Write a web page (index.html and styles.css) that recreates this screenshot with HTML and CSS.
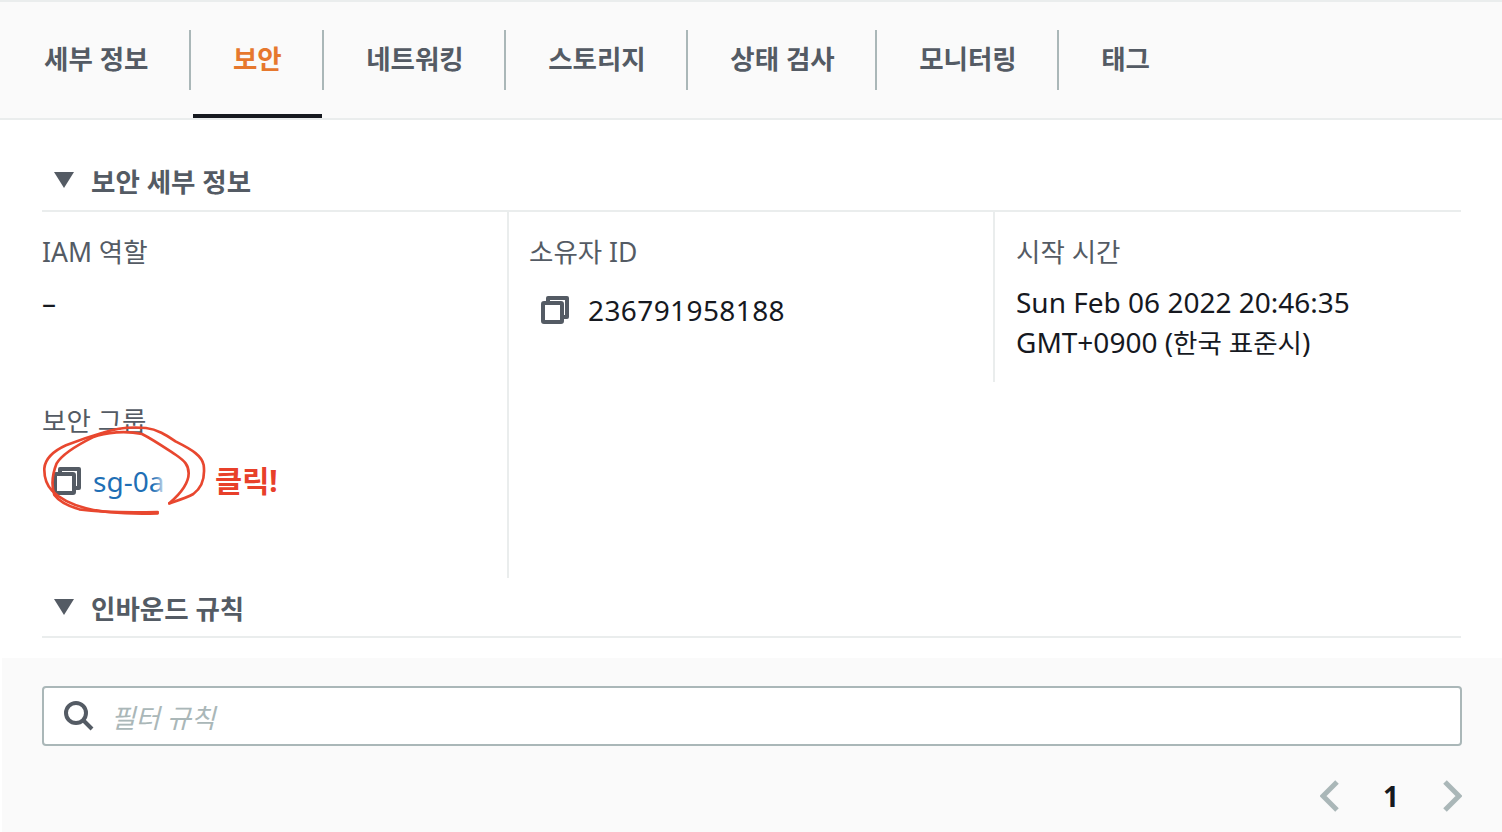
FILE: index.html
```html
<!DOCTYPE html>
<html lang="ko">
  <head>
    <meta charset="UTF-8" />
    <title>보안</title>
    <link rel="stylesheet" href="styles.css">
  </head>
  <body>
    <div class="tabs">
      <a class="tab">세부 정보</a>
      <a class="tab active">보안</a>
      <a class="tab">네트워킹</a>
      <a class="tab">스토리지</a>
      <a class="tab">상태 검사</a>
      <a class="tab">모니터링</a>
      <a class="tab last">태그</a>
    </div>

    <div class="section">
      <div class="section-head">
        <span class="caret"></span>
        <h2>보안 세부 정보</h2>
      </div>
      <div class="details">
        <div class="col col-first">
          <div class="item item-iam">
            <div class="label">IAM 역할</div>
            <div class="value">–</div>
          </div>
          <div class="item">
            <div class="label">보안 그룹</div>
            <div class="sg-row">
              <svg class="copy" viewBox="0 0 28 28"><path d="M7 7V2h19v19h-5" /><rect x="2" y="7" width="19" height="19" rx="1" /></svg>
              <a class="sg-link">sg-0a</a>
              <span class="fade"></span>
              <span class="click-note">클릭!</span>
            </div>
          </div>
          <!-- red pen circle around the security group link -->
          <svg class="scribble" viewBox="0 0 540 312">
            <path d="M400 250C430 240 455 232 472 222C495 205 508 175 503 135C498 108 470 90 420 65C390 45 365 28 330 24C290 20 240 25 200 38C165 48 125 62 90 76C55 92 28 115 25 145C24 175 32 195 48 212C70 235 100 252 150 265C200 278 290 282 365 280" />
            <path d="M365 276C290 278 190 276 130 268C95 258 70 245 55 225C47 200 48 165 62 130C80 100 130 72 170 52C210 36 270 32 318 42C350 58 385 82 420 105C445 122 458 135 458 160C458 190 435 220 400 250" />
          </svg>
        </div>
        <div class="col col-mid">
          <div class="label">소유자 ID</div>
          <div class="owner-row">
            <svg class="copy" viewBox="0 0 28 28"><path d="M7 7V2h19v19h-5" /><rect x="2" y="7" width="19" height="19" rx="1" /></svg>
            <span class="value account">236791958188</span>
          </div>
        </div>
        <div class="col col-last">
          <div class="label">시작 시간</div>
          <div class="value time">Sun Feb 06 2022 20:46:35<br>GMT+0900 (<span class="ko">한국 표준시</span>)</div>
        </div>
      </div>
    </div>

    <div class="section section-inbound">
      <div class="section-head">
        <span class="caret"></span>
        <h2>인바운드 규칙</h2>
      </div>
    </div>

    <div class="filter-area">
      <div class="filter">
        <svg class="search" viewBox="0 0 30 30"><circle cx="12" cy="12" r="10" /><path d="M19 19l9 9" /></svg>
        <span class="placeholder">필터 규칙</span>
      </div>
      <div class="pager">
        <svg class="chev" viewBox="0 0 20 32"><path d="M17 2L3 16l14 14" /></svg>
        <span class="page-num">1</span>
        <svg class="chev" viewBox="0 0 20 32"><path d="M3 2l14 14L3 30" /></svg>
      </div>
    </div>
  </body>
</html>
```
FILE: styles.css
```css
* {
  box-sizing: border-box;
  margin: 0;
  padding: 0;
}

body {
  height: 832px;
  overflow: hidden;
  background-color: #ffffff;
  color: #16191f;
  font-family: "Noto Sans", "Noto Sans CJK KR", sans-serif;
  font-size: 26.5px;
}

/* tabs */
.tabs {
  display: flex;
  height: 120px;
  padding: 28px 0 0 2px;
  background-color: #fafafa;
  border-top: 2px solid #eaeded;
  border-bottom: 2px solid #eaeded;
}

.tab {
  position: relative;
  height: 60px;
  padding: 0 40.5px 0 42px;
  border-right: 2px solid #aab7b8;
  color: #545b64;
  font-weight: 700;
  line-height: 58px;
  white-space: nowrap;
}

.tab.last {
  border-right: 0;
}

.tab.active {
  color: #e6782e;
}

.tab.active::after {
  content: "";
  position: absolute;
  left: 2px;
  right: 0;
  top: 84px;
  height: 4px;
  background-color: #16191f;
}

/* sections */
.section {
  margin: 0 41px 0 42px;
}

.section-head {
  display: flex;
  align-items: center;
  gap: 17px;
  height: 92px;
  padding: 30px 0 0 12px;
  border-bottom: 2px solid #eaeded;
}

.section-inbound .section-head {
  height: 60px;
  padding-top: 0;
}

.section-head h2 {
  color: #545b64;
  font-size: 26.5px;
  font-weight: 700;
}

.caret {
  width: 0;
  height: 0;
  border-left: 10.5px solid transparent;
  border-right: 10.5px solid transparent;
  border-top: 16px solid #545b64;
}

.details {
  display: grid;
  grid-template-columns: 467px 484px 1fr;
  height: 366px;
  align-items: start;
}

.col {
  padding: 20px 0 0 20px;
}

.col-first {
  position: relative;
  height: 366px;
  padding-left: 0;
  border-right: 2px solid #eaeded;
}

.col-last {
  height: 170px;
  padding-left: 21px;
  border-left: 2px solid #eaeded;
}

.label {
  color: #545b64;
  line-height: 40px;
}

.value {
  color: #16191f;
  font-size: 28px;
  line-height: 40px;
}

.ko {
  font-size: 26.5px;
}

.item-iam {
  height: 169px;
}

.item-iam .value {
  margin-top: 10px;
}

.time {
  margin-top: 10px;
}

.account {
  letter-spacing: 0.4px;
}

.owner-row {
  display: flex;
  align-items: center;
  gap: 19px;
  margin: 18px 0 0 12px;
}

.sg-row {
  position: relative;
  display: flex;
  align-items: center;
  gap: 12px;
  margin: 20px 0 0 11px;
}

.copy {
  width: 28px;
  height: 28px;
  fill: none;
  stroke: #545b64;
  stroke-width: 4;
  stroke-linejoin: round;
  flex-shrink: 0;
}

.sg-link {
  color: #1f6fb5;
  font-size: 28px;
  line-height: 40px;
}

.fade {
  position: absolute;
  left: 100px;
  top: 4px;
  width: 26px;
  height: 34px;
  background: linear-gradient(to right, rgba(255, 255, 255, 0), #ffffff 55%);
}

.click-note {
  position: absolute;
  left: 162px;
  top: 0;
  color: #e8402a;
  font-size: 29.5px;
  font-weight: 700;
  line-height: 40px;
  white-space: nowrap;
}

.scribble {
  position: absolute;
  left: -6px;
  top: 208px;
  width: 180px;
  height: 104px;
  fill: none;
  stroke: #e8472f;
  stroke-width: 8;
  stroke-linecap: round;
}

/* filter */
.filter-area {
  height: 174px;
  margin: 20px 0 0 2px;
  padding: 28px 40px 0;
  background-color: #fafafa;
}

.filter {
  display: flex;
  align-items: center;
  gap: 17px;
  height: 60px;
  padding-left: 20px;
  background-color: #ffffff;
  border: 2px solid #aab7b8;
  border-radius: 4px;
}

.search {
  width: 30px;
  height: 30px;
  fill: none;
  stroke: #545b64;
  stroke-width: 4;
}

.placeholder {
  color: #aab7b8;
  font-style: italic;
}

.pager {
  display: flex;
  align-items: center;
  justify-content: flex-end;
  gap: 43px;
  margin-top: 34px;
}

.chev {
  width: 20px;
  height: 32px;
  fill: none;
  stroke: #aab7b8;
  stroke-width: 5;
}

.page-num {
  font-size: 28px;
  font-weight: 700;
  line-height: 30px;
}
```
